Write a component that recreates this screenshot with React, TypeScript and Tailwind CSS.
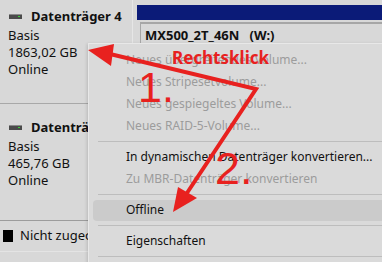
import React from 'react';

const font = { fontFamily: '"Noto Sans", "Open Sans", sans-serif' };

const DiskIcon: React.FC = () => (
  <svg width="13" height="5" viewBox="0 0 13 5" className="shrink-0">
    <rect x="0" y="0" width="13" height="5" fill="#4a4a4a" />
    <rect x="0" y="0" width="13" height="1" fill="#8a8a8a" />
    <rect x="9" y="2" width="2" height="1" fill="#3ad13a" />
  </svg>
);

const MenuItem: React.FC<{ label: string; disabled?: boolean; active?: boolean }> = ({ label, disabled, active }) => (
  <div className="h-[22px] flex items-center">
    <div
      className={`flex-1 h-[21px] flex items-center pl-[33px] rounded-sm ${active ? 'bg-[#cbcbcb]' : ''} ${
        disabled ? 'text-[#9c9c9c]' : 'text-[#111111]'
      }`}
    >
      {label}
    </div>
  </div>
);

const Separator: React.FC = () => <div className="h-px bg-[#bdbdbd] my-[4px] ml-[5px]" />;

const DiskInfo: React.FC<{ name: string; size: string }> = ({ name, size }) => (
  <div className="flex flex-col text-[13px] leading-[17px] text-[#111]">
    <div className="flex items-center gap-[9px] pl-[9px] h-[20px]">
      <DiskIcon />
      <span className="font-bold whitespace-nowrap">{name}</span>
    </div>
    <div className="pl-[8px] pt-[1px]">Basis</div>
    <div className="pl-[8px]">{size}</div>
    <div className="pl-[8px]">Online</div>
  </div>
);

const App: React.FC = () => {
  return (
    <div className="relative w-[382px] h-[262px] overflow-hidden bg-[#d8d8d8]" style={font}>
      {/* Disk 4 row */}
      <div className="flex h-[104px] border-b border-[#a8a8a8]">
        <div className="w-[133px] pt-[6px] border-r border-[#e6e6e6]">
          <DiskInfo name="Datenträger 4" size="1863,02 GB" />
        </div>
        <div className="flex-1 pl-[4px] pt-[5px] flex flex-col">
          <div className="h-[15px] bg-[#0b1b78]" />
          <div className="h-[2px]" />
          <div className="flex-1 ml-[3px] border-t-2 border-l border-[#a6a6a6] pl-[4px] pt-[2px]">
            <div className="text-[13px] leading-[18px] font-bold text-[#111] whitespace-nowrap">MX500_2T_46N&nbsp;&nbsp;&nbsp;(W:)</div>
          </div>
        </div>
      </div>

      {/* Disk 2 row */}
      <div className="h-[117px] pt-[13px] border-b border-[#9c9c9c]">
        <DiskInfo name="Datenträger 2" size="465,76 GB" />
      </div>

      {/* Legend */}
      <div className="h-[31px] flex items-center gap-[7px] pl-[3px] border-b border-[#e4e4e4] text-[13px] text-[#111]">
        <div className="w-[10px] h-[12px] bg-black" />
        <span className="whitespace-nowrap">Nicht zugeordnet</span>
      </div>

      {/* Context menu */}
      <div className="absolute left-[88px] top-[43px] right-[-10px] bottom-[-20px] bg-[#dadada] border border-[#e8e8e8] shadow-[-1px_1px_3px_rgba(0,0,0,0.15)] pl-[4px] pt-[5px] text-[12px]">
        <MenuItem label="Neues übergreifendes Volume..." disabled />
        <MenuItem label="Neues Stripesetvolume..." disabled />
        <MenuItem label="Neues gespiegeltes Volume..." disabled />
        <MenuItem label="Neues RAID-5-Volume..." disabled />
        <Separator />
        <MenuItem label="In dynamischen Datenträger konvertieren..." />
        <MenuItem label="Zu MBR-Datenträger konvertieren" disabled />
        <Separator />
        <MenuItem label="Offline" active />
        <Separator />
        <MenuItem label="Eigenschaften" />
        <Separator />
      </div>

      {/* Annotation */}
      <div className="absolute left-[172px] top-[49px] text-[17px] font-bold text-[#e8211f] leading-none whitespace-nowrap">
        Rechtsklick
      </div>
      <div className="absolute left-[138px] top-[66px] text-[43px] font-normal text-[#e8211f] leading-[43px] font-['Liberation_Sans',sans-serif]">
        1.
      </div>
      <div className="absolute left-[215px] top-[146px] text-[45px] font-normal text-[#e8211f] leading-[45px] font-['Liberation_Sans',sans-serif]">
        2.
      </div>
      <svg className="absolute inset-0 pointer-events-none" width="382" height="262" viewBox="0 0 382 262">
        <polyline points="110,54 256,89 187,193" fill="none" stroke="#e8211f" strokeWidth="4" strokeLinejoin="miter" />
        <polygon points="88,50 114,44 111,66" fill="#e8211f" />
        <polygon points="173,212 178,187 197,198" fill="#e8211f" />
      </svg>
    </div>
  );
};

export default App;
